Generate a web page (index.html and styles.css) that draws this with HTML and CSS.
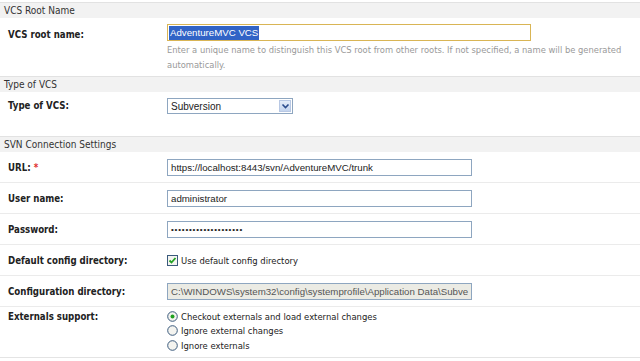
FILE: index.html
```html
<!DOCTYPE html>
<html lang="en">
<head>
  <title>VCS Root</title>
  <meta charset="UTF-8">
  <link rel="stylesheet" href="styles.css">
</head>
<body>
  <div class="form">
    <div class="section">VCS Root Name</div>
    <div class="row row-name">
      <div class="label label-low">VCS root name:</div>
      <div class="field">
        <div class="text-input wide focused"><span class="sel">AdventureMVC VCS</span></div>
        <div class="hint">Enter a unique name to distinguish this VCS root from other roots. If not specified, a name will be generated automatically.</div>
      </div>
    </div>

    <div class="section">Type of VCS</div>
    <div class="row row-select">
      <div class="label">Type of VCS:</div>
      <div class="field">
        <div class="select">
          <span class="select-value">Subversion</span>
          <span class="select-btn">
            <svg width="9" height="7" viewBox="0 0 9 7"><path d="M1.5 1.5 L4.5 4.5 L7.5 1.5" fill="none" stroke="#2b4c8c" stroke-width="1.6"/></svg>
          </span>
        </div>
      </div>
    </div>

    <div class="section">SVN Connection Settings</div>
    <div class="row">
      <div class="label">URL: <span class="req">*</span></div>
      <div class="field">
        <div class="text-input">https://localhost:8443/svn/AdventureMVC/trunk</div>
      </div>
    </div>
    <div class="row">
      <div class="label">User name:</div>
      <div class="field">
        <div class="text-input">administrator</div>
      </div>
    </div>
    <div class="row">
      <div class="label">Password:</div>
      <div class="field">
        <div class="text-input password">&bull;&bull;&bull;&bull;&bull;&bull;&bull;&bull;&bull;&bull;&bull;&bull;&bull;&bull;&bull;&bull;&bull;&bull;&bull;&bull;</div>
      </div>
    </div>
    <div class="row">
      <div class="label">Default config directory:</div>
      <div class="field">
        <div class="option">
          <svg class="check" width="11" height="11" viewBox="0 0 11 11">
            <rect x="0.5" y="0.5" width="10" height="10" fill="#f4f4f0" stroke="#3a5a7c"/>
            <path d="M2.5 5.5 L4.5 7.5 L8.5 3" fill="none" stroke="#21a121" stroke-width="1.8"/>
          </svg>
          Use default config directory
        </div>
      </div>
    </div>
    <div class="row">
      <div class="label">Configuration directory:</div>
      <div class="field">
        <div class="text-input disabled">C:\WINDOWS\system32\config\systemprofile\Application Data\Subve</div>
      </div>
    </div>
    <div class="row row-radios">
      <div class="label">Externals support:</div>
      <div class="field">
        <div class="option">
          <svg class="radio" width="11" height="11" viewBox="0 0 11 11">
            <circle cx="5.5" cy="5.5" r="4.8" fill="#f4f4f0" stroke="#3a5a7c"/>
            <circle cx="5.5" cy="5.5" r="2" fill="#21a121"/>
          </svg>
          Checkout externals and load external changes
        </div>
        <div class="option">
          <svg class="radio" width="11" height="11" viewBox="0 0 11 11">
            <circle cx="5.5" cy="5.5" r="4.8" fill="#f4f4f0" stroke="#3a5a7c"/>
          </svg>
          Ignore external changes
        </div>
        <div class="option">
          <svg class="radio" width="11" height="11" viewBox="0 0 11 11">
            <circle cx="5.5" cy="5.5" r="4.8" fill="#f4f4f0" stroke="#3a5a7c"/>
          </svg>
          Ignore externals
        </div>
      </div>
    </div>
  </div>
</body>
</html>
```

FILE: styles.css
```css
body {
  margin: 0;
  font-family: "DejaVu Sans Condensed", "DejaVu Sans", sans-serif;
  background-color: #fff;
  color: #222;
}

.form {
  padding-top: 2px;
}

.section {
  height: 15px;
  line-height: 15px;
  padding-left: 4px;
  font-size: 10px;
  color: #333;
  background-color: #f2f2f2;
  border-top: 1px solid #e2e2e2;
}

.row {
  display: flex;
  padding: 7px 0 6px;
}

.row + .row {
  border-top: 1px solid #ebebeb;
}

.row-name {
  padding: 6px 0 4px;
}

.row-select {
  padding: 6px 0 22px;
}

.row-radios {
  padding: 2px 0 4px;
  border-bottom: 1px solid #e4e4e4;
}

.label {
  width: 159px;
  padding-left: 8px;
  font-size: 9.6px;
  font-weight: bold;
  line-height: 17px;
  color: #222;
  flex-shrink: 0;
}

.label-low {
  padding-top: 2px;
}

.req {
  color: #e03030;
}

.field {
  flex: 1;
}

.text-input {
  width: 297px;
  height: 15px;
  line-height: 15px;
  padding: 0 3px;
  border: 1px solid #8ea6c0;
  font-family: "Liberation Sans", Arial, sans-serif;
  font-size: 9.7px;
  color: #222;
  white-space: nowrap;
  overflow: hidden;
}

.text-input.wide {
  width: 358px;
}

.text-input.focused {
  border-color: #d9b555;
  padding-left: 1px;
}

.sel {
  display: inline-block;
  height: 14px;
  line-height: 14px;
  padding: 0 1px;
  background-color: #3163c6;
  color: #fff;
}

.text-input.password {
  font-size: 8px;
  letter-spacing: 0.8px;
}

.text-input.disabled {
  background-color: #ebebe4;
  color: #555;
}

.hint {
  margin-top: 1px;
  width: 460px;
  font-size: 9.3px;
  line-height: 15px;
  color: #999;
}

.row-select .label {
  line-height: 16px;
}

.select {
  display: flex;
  align-items: center;
  width: 124px;
  height: 14px;
  border: 1px solid #8ea6c0;
  font-family: "Liberation Sans", Arial, sans-serif;
  font-size: 10px;
}

.select-value {
  flex: 1;
  padding-left: 3px;
}

.select-btn {
  display: flex;
  align-items: center;
  justify-content: center;
  width: 12px;
  height: 12px;
  margin-right: 1px;
  background: linear-gradient(#e4ecf8, #c4d4ee);
  border: 1px solid #b8c8e4;
  box-sizing: border-box;
}

.option {
  display: flex;
  align-items: center;
  height: 17px;
  font-size: 9.4px;
  color: #222;
}

.option svg {
  margin-right: 3px;
  flex-shrink: 0;
}

.row-radios .label {
  line-height: 15px;
}

.row-radios .option {
  height: 14.5px;
}
```
